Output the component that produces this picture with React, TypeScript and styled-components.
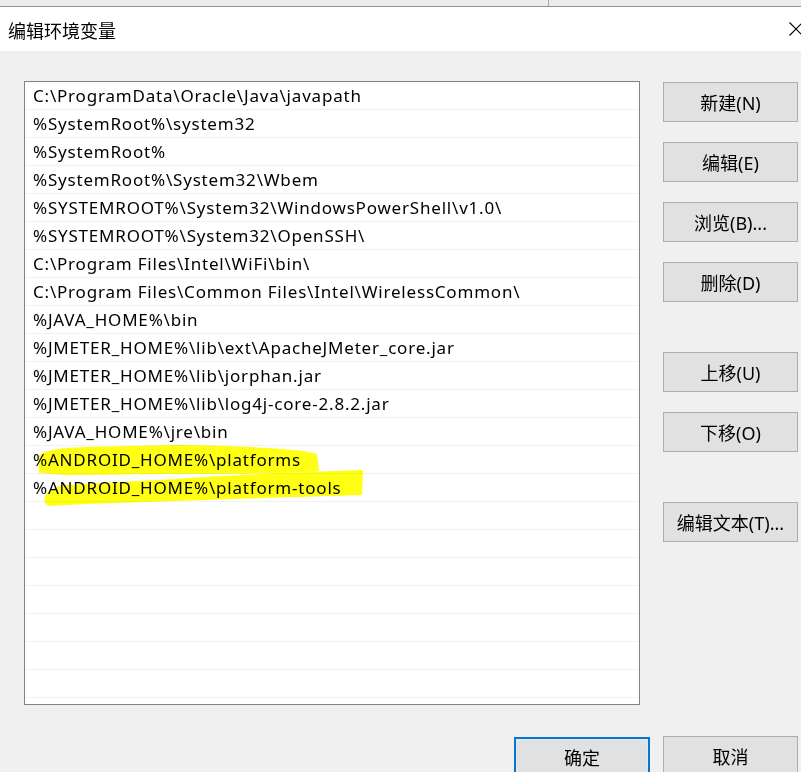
import React from "react";
import styled, { createGlobalStyle } from "styled-components";

const GlobalStyle = createGlobalStyle`
  html, body { margin: 0; padding: 0; background: #f0f0f0; overflow: hidden; }
  body { font-family: "Noto Sans", "Noto Sans CJK SC", sans-serif; }
`;

const Page = styled.div`
  width: 801px;
  height: 772px;
  display: flex;
  flex-direction: column;
  overflow: hidden;
  background: #f0f0f0;
`;

const BackStrip = styled.div`
  flex: none;
  height: 6px;
  background: #ececec;
  border-bottom: 1px solid #8f8f8f;
  display: flex;
`;

const BackPane = styled.div`
  width: 548px;
  border-right: 1px solid #a8a8a8;
`;

const TitleBar = styled.div`
  flex: none;
  height: 44px;
  background: #ffffff;
  display: flex;
  align-items: center;
  justify-content: space-between;
  padding-left: 8px;
  overflow: hidden;
`;

const Title = styled.span`
  font-family: "Noto Sans CJK SC", sans-serif;
  font-size: 18px;
  color: #000;
  margin-top: 1px;
`;

const CloseIcon = styled.svg`
  width: 16px;
  height: 16px;
  margin-right: -3px;
  flex: none;
`;

const Body = styled.div`
  flex: none;
  display: flex;
  flex-direction: column;
  padding: 30px 3px 0 24px;
`;

const Main = styled.div`
  display: flex;
  gap: 23px;
`;

const ListBox = styled.div`
  position: relative;
  width: 614px;
  height: 622px;
  background: #ffffff;
  border: 1px solid #828282;
  overflow: hidden;
`;

const Row = styled.div`
  height: 27px;
  border-bottom: 1px solid #f2f2f2;
  display: flex;
  align-items: center;
  padding-left: 8px;
  font-family: "Noto Sans", "Noto Sans CJK SC", sans-serif;
  font-size: 17px;
  letter-spacing: 0.8px;
  color: #000;
  white-space: nowrap;
`;

const Marker = styled.svg`
  position: absolute;
  left: 0;
  top: 0;
  width: 614px;
  height: 622px;
  pointer-events: none;
  mix-blend-mode: multiply;
`;

const ButtonColumn = styled.div`
  display: flex;
  flex-direction: column;
  width: 135px;
  padding-top: 1px;
`;

const Button = styled.div<{ $gap?: number; $primary?: boolean }>`
  box-sizing: border-box;
  height: 40px;
  margin-top: ${(p) => p.$gap ?? 0}px;
  background: #e1e1e1;
  border: ${(p) => (p.$primary ? "2px solid #0078d7" : "1px solid #adadad")};
  box-shadow: ${(p) => (p.$primary ? "inset 0 0 0 1px #f4e4d8" : "none")};
  display: flex;
  align-items: center;
  justify-content: center;
  font-family: "Noto Sans", "Noto Sans CJK SC", sans-serif;
  font-size: 18px;
  color: #000;
  flex: none;
`;

const Footer = styled.div`
  display: flex;
  justify-content: flex-end;
  gap: 13px;
  margin-top: 31px;
`;

const FooterButton = styled(Button)`
  width: 135px;
`;

const PrimaryButton = styled(Button)`
  width: 136px;
  margin-top: 1px;
`;

const entries = [
  "C:\\ProgramData\\Oracle\\Java\\javapath",
  "%SystemRoot%\\system32",
  "%SystemRoot%",
  "%SystemRoot%\\System32\\Wbem",
  "%SYSTEMROOT%\\System32\\WindowsPowerShell\\v1.0\\",
  "%SYSTEMROOT%\\System32\\OpenSSH\\",
  "C:\\Program Files\\Intel\\WiFi\\bin\\",
  "C:\\Program Files\\Common Files\\Intel\\WirelessCommon\\",
  "%JAVA_HOME%\\bin",
  "%JMETER_HOME%\\lib\\ext\\ApacheJMeter_core.jar",
  "%JMETER_HOME%\\lib\\jorphan.jar",
  "%JMETER_HOME%\\lib\\log4j-core-2.8.2.jar",
  "%JAVA_HOME%\\jre\\bin",
  "%ANDROID_HOME%\\platforms",
  "%ANDROID_HOME%\\platform-tools",
];

const rows = [...entries, ...Array(8).fill("")];

const sideButtons: { label: string; gap: number }[] = [
  { label: "新建(N)", gap: 0 },
  { label: "编辑(E)", gap: 20 },
  { label: "浏览(B)...", gap: 20 },
  { label: "删除(D)", gap: 20 },
  { label: "上移(U)", gap: 50 },
  { label: "下移(O)", gap: 20 },
  { label: "编辑文本(T)...", gap: 50 },
];

export default function App() {
  return (
    <Page>
      <GlobalStyle />
      <BackStrip>
        <BackPane />
      </BackStrip>
      <TitleBar>
        <Title>编辑环境变量</Title>
        <CloseIcon viewBox="0 0 16 16">
          <path d="M1.5 1.5 L14.5 14.5 M14.5 1.5 L1.5 14.5" stroke="#000" strokeWidth="1.1" fill="none" />
        </CloseIcon>
      </TitleBar>
      <Body>
        <Main>
          <ListBox>
            {rows.map((r, i) => (
              <Row key={i}>{r}</Row>
            ))}
            <Marker viewBox="0 0 614 622">
              <path
                d="M14 374 C20 368 34 366 60 365 L150 363 C200 363 250 366 278 369 L292 372 L294 389 C260 392 200 392 140 392 L40 393 L14 391 Z"
                fill="#ffff14"
              />
              <path
                d="M20 414 C24 408 30 405 40 403 L150 397 C220 392 280 390 310 389 L338 388 L337 413 C300 414 240 416 180 418 L60 422 L23 424 C19 421 19 417 20 414 Z"
                fill="#ffff14"
              />
            </Marker>
          </ListBox>
          <ButtonColumn>
            {sideButtons.map((b) => (
              <Button key={b.label} $gap={b.gap}>
                {b.label}
              </Button>
            ))}
          </ButtonColumn>
        </Main>
        <Footer>
          <PrimaryButton $primary>确定</PrimaryButton>
          <FooterButton>取消</FooterButton>
        </Footer>
      </Body>
    </Page>
  );
}
